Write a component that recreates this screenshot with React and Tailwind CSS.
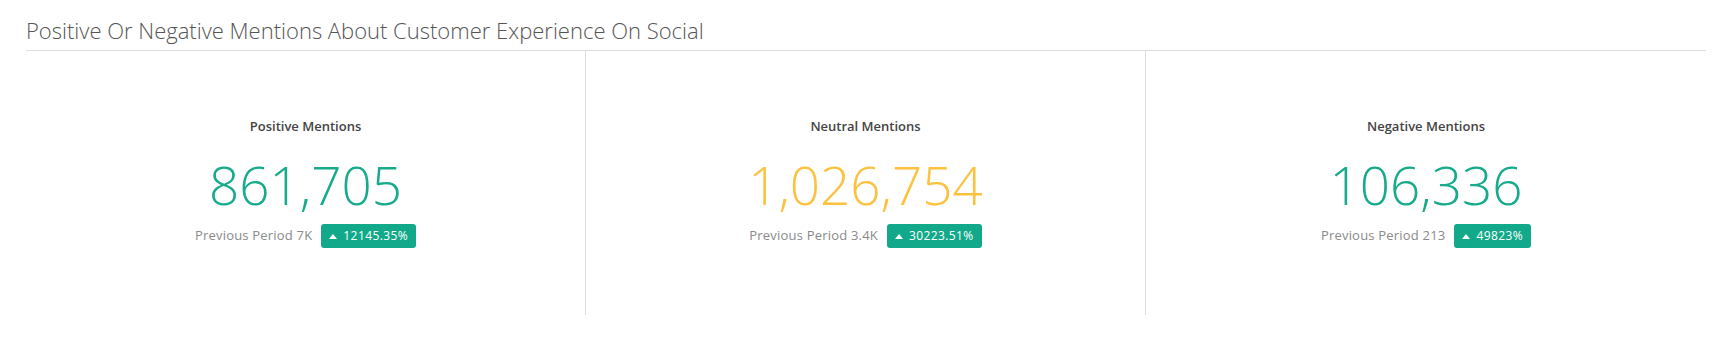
import React from "react";

const items = [
  { label: "Positive Mentions", value: "861,705", color: "text-[#17ab8b]", prev: "7K", pct: "12145.35%" },
  { label: "Neutral Mentions", value: "1,026,754", color: "text-[#fcc23f]", prev: "3.4K", pct: "30223.51%" },
  { label: "Negative Mentions", value: "106,336", color: "text-[#17ab8b]", prev: "213", pct: "49823%" },
];

function Card({ item, last }) {
  return (
    <div className={`flex flex-col items-center pt-[66px] ${last ? "" : "border-r border-[#dcdcdc]"}`}>
      <div className="text-[13px] font-semibold text-[#444] leading-[18px]">{item.label}</div>
      <div className={`mt-[18px] text-[53px] font-light leading-[64px] ${item.color}`}>{item.value}</div>
      <div className="mt-[7px] flex items-center gap-[9px]">
        <span className="text-[13px] text-[#8a8a8a] tracking-[0.2px]">Previous Period {item.prev}</span>
        <span className="flex items-center gap-[6px] rounded-[3px] bg-[#12a98a] px-[8px] h-[24px] text-[12px] font-medium text-white tracking-[0.4px]">
          <svg width="8" height="5" viewBox="0 0 8 5"><path d="M0 5 L4 0 L8 5 Z" fill="white" /></svg>
          {item.pct}
        </span>
      </div>
    </div>
  );
}

export default function App() {
  return (
    <div className="w-[1730px] h-[340px] bg-white pl-[26px] pr-[24px] pt-[15px]" style={{ fontFamily: '"Open Sans", sans-serif' }}>
      <div className="text-[22px] font-light text-[#555] leading-[30px] pb-[5px] border-b border-[#dcdcdc]">
        Positive Or Negative Mentions About Customer Experience On Social
      </div>
      <div className="grid grid-cols-3 h-[264px]">
        {items.map((it, i) => (
          <Card key={i} item={it} last={i === 2} />
        ))}
      </div>
    </div>
  );
}
